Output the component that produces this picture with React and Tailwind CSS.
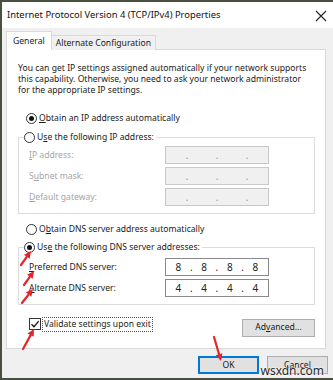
import React from 'react';

// Windows "IPv4 Properties" dialog, scaled down as in the screenshot
const font = "font-['Noto_Sans','Open_Sans',sans-serif]";

const Radio = ({ checked }) => (
  <span className="w-[11px] h-[11px] rounded-full border border-[#333] bg-white flex items-center justify-center shrink-0">
    {checked && <span className="w-[5px] h-[5px] rounded-full bg-[#111]" />}
  </span>
);

const IpBox = ({ parts, disabled }) => (
  <div
    className={`w-[104px] h-[18px] border flex items-center justify-around px-[6px] text-[10px] ${
      disabled ? 'border-[#c8c8c8] bg-[#f0f0f0] text-[#9a9a9a]' : 'border-[#8a8a8a] bg-white text-[#222]'
    }`}
  >
    {parts.map((p, i) => (
      <span key={i} className="w-[10px] text-center">{p}</span>
    ))}
  </div>
);

const Row = ({ label, parts, disabled }) => (
  <div className="flex items-center h-[21px]">
    <span className={`w-[146px] pl-[10px] ${disabled ? 'text-[#a5a5a5]' : 'text-[#1a1a1a]'}`}>{label}</span>
    <IpBox parts={parts} disabled={disabled} />
  </div>
);

const Arrow = ({ x1, y1, x2, y2 }) => {
  const a = Math.atan2(y2 - y1, x2 - x1);
  const L = 7;
  const W = 3.5;
  const bx = x2 - L * Math.cos(a);
  const by = y2 - L * Math.sin(a);
  const px = -Math.sin(a) * W;
  const py = Math.cos(a) * W;
  return (
    <g>
      <line x1={x1} y1={y1} x2={bx} y2={by} stroke="#e4262b" strokeWidth="2.2" strokeLinecap="round" />
      <polygon points={`${x2},${y2} ${bx + px},${by + py} ${bx - px},${by - py}`} fill="#e4262b" />
    </g>
  );
};

const dotted = (d) => d.flatMap((x, i) => (i ? ['.', x] : [x]));

export default function App() {
  return (
    <div className={`${font} relative w-[333px] h-[380px] bg-[#f0f0f0] border-l-2 border-t-2 border-b-2 border-[#4a5040] flex flex-col text-[8.6px] text-[#1a1a1a] overflow-hidden`}>
      {/* title bar */}
      <div className="h-[26px] bg-white flex items-center justify-between pl-[5px] pr-[6px] shrink-0">
        <span className="text-[9.4px] text-[#111]">Internet Protocol Version 4 (TCP/IPv4) Properties</span>
        <svg width="12" height="12" viewBox="0 0 12 12" className="mt-[1px]">
          <path d="M1 1 L11 11 M11 1 L1 11" stroke="#222" strokeWidth="1.1" />
        </svg>
      </div>

      {/* tabs */}
      <div className="flex items-end pl-[4px] mt-[3px] h-[19px] relative z-10">
        <div className="h-[19px] px-[6px] bg-white border border-b-0 border-[#d9d9d9] flex items-center">General</div>
        <div className="h-[15px] px-[4px] bg-[#f0f0f0] border border-l-0 border-[#d9d9d9] border-b-0 flex items-center">Alternate Configuration</div>
      </div>

      {/* tab panel */}
      <div className="ml-[4px] w-[320px] h-[300px] -mt-[1px] bg-white border border-[#d9d9d9] flex flex-col px-[11px] pt-[13px]">
        <p className="leading-[11px]">
          You can get IP settings assigned automatically if your network supports
          this capability. Otherwise, you need to ask your network administrator
          for the appropriate IP settings.
        </p>

        <div className="flex items-center gap-[2px] ml-[8px] mt-[16px] h-[13px]">
          <Radio checked />
          <span><u>O</u>btain an IP address automatically</span>
        </div>

        <fieldset className="border border-[#dcdcdc] mt-[6px] pb-[5px] pt-[1px] w-[297px]">
          <legend className="ml-[5px] flex items-center gap-[2px] bg-white pr-[2px] text-[8.6px]">
            <Radio />
            <span>U<u>s</u>e the following IP address:</span>
          </legend>
          <Row label={<><u>I</u>P address:</>} parts={['.', '.', '.']} disabled />
          <Row label={<>S<u>u</u>bnet mask:</>} parts={['.', '.', '.']} disabled />
          <Row label={<><u>D</u>efault gateway:</>} parts={['.', '.', '.']} disabled />
        </fieldset>

        <div className="flex items-center gap-[2px] ml-[8px] mt-[9px] h-[13px]">
          <Radio />
          <span>O<u>b</u>tain DNS server address automatically</span>
        </div>

        <fieldset className="border border-[#dcdcdc] mt-[5px] pb-[5px] pt-[3px] w-[297px]">
          <legend className="ml-[5px] flex items-center gap-[2px] bg-white pr-[2px] text-[8.6px]">
            <Radio checked />
            <span>Us<u>e</u> the following DNS server addresses:</span>
          </legend>
          <Row label={<><u>P</u>referred DNS server:</>} parts={dotted(['8', '8', '8', '8'])} />
          <Row label={<><u>A</u>lternate DNS server:</>} parts={dotted(['4', '4', '4', '4'])} />
        </fieldset>

        <div className="flex items-start justify-between mt-[12px] pl-[11px] w-[297px]">
          <div className="flex items-center gap-[1px] h-[15px]">
            <span className="w-[12px] h-[12px] border border-[#333] bg-white flex items-center justify-center">
              <svg width="10" height="10" viewBox="0 0 10 10">
                <path d="M1.5 5.2 L4 7.7 L8.7 2.2" stroke="#111" strokeWidth="1.3" fill="none" />
              </svg>
            </span>
            <span className="border border-dotted border-[#555] px-[1px] leading-[13px]">Validate settings upon exit</span>
          </div>
          <div className="mt-[2px] w-[73px] h-[18px] bg-[#e1e1e1] border border-[#adadad] flex items-center justify-center">
            Ad<u>v</u>anced...
          </div>
        </div>
      </div>

      {/* buttons */}
      <div className="flex justify-end gap-[8px] pr-[5px] mt-[7px]">
        <div className="w-[61px] h-[18px] bg-[#e1e1e1] border-2 border-[#0078d7] flex items-center justify-center">OK</div>
        <div className="w-[61px] h-[18px] bg-[#e1e1e1] border border-[#adadad] flex items-center justify-center">Cancel</div>
      </div>

      {/* watermark */}
      <span className="absolute right-[9px] bottom-[1px] text-[12px] leading-[13px] text-[#2b2b2b] [text-shadow:0_0_2px_#fff,0_0_2px_#fff]">wsxdn.com</span>

      {/* red annotation arrows */}
      <svg className="absolute left-[-2px] top-[-2px] pointer-events-none" width="333" height="380">
        <Arrow x1={21} y1={265} x2={31} y2={251} />
        <Arrow x1={24} y1={285} x2={34} y2={271} />
        <Arrow x1={22} y1={303} x2={33} y2={289} />
        <Arrow x1={23} y1={349} x2={34} y2={329} />
        <Arrow x1={214} y1={337} x2={221} y2={361} />
      </svg>
    </div>
  );
}
